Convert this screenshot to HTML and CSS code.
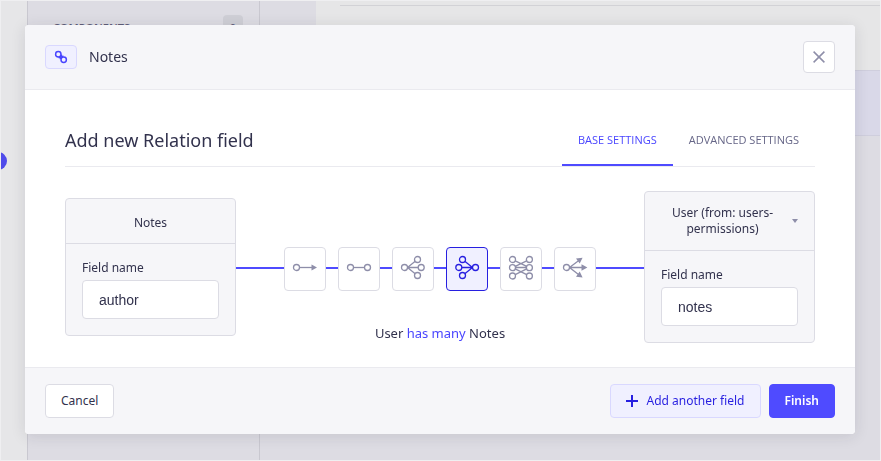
FILE: index.html
```html
<!DOCTYPE html>
<html lang="en">
<head>
<meta charset="utf-8">
<title>Content-Type Builder</title>
<link rel="stylesheet" href="styles.css">
</head>
<body>
<div class="page">
  <div class="rail"><span class="rail-dot"></span></div>
  <nav class="subnav">
    <span class="subnav-title">COMPONENTS</span>
    <span class="subnav-count">0</span>
  </nav>
  <main class="content">
    <div class="panel"><div class="panel-rule"></div></div>
    <div class="panel-action"></div>
  </main>
</div>

<div class="overlay">
  <div class="modal" role="dialog" aria-modal="true" aria-labelledby="dialog-title">
    <header class="modal-header">
      <span class="badge">
        <svg width="14" height="14" viewBox="0 0 14 14" fill="none" stroke="currentColor" stroke-width="1.5">
          <circle cx="4.3" cy="4.3" r="2.7"/><circle cx="9.7" cy="9.7" r="2.7"/><path d="M4.6 7.6C6 7.8 7.6 6.4 7.4 4.6M6.4 9.2C6.2 7.4 7.8 6 9.4 6.2"/>
        </svg>
      </span>
      <span class="crumb">Notes</span>
      <button class="close" type="button" aria-label="Close">
        <svg width="12" height="12" viewBox="0 0 12 12" fill="none" stroke="currentColor" stroke-width="1.5"><path d="M.6 .6L11.4 11.4M11.4 .6L.6 11.4"/></svg>
      </button>
    </header>

    <div class="modal-body">
      <div class="title-row">
        <h1 id="dialog-title">Add new Relation field</h1>
        <div class="tabs" role="tablist">
          <button class="tab tab-active" type="button" role="tab" aria-selected="true">BASE SETTINGS</button>
          <button class="tab" type="button" role="tab" aria-selected="false">ADVANCED SETTINGS</button>
        </div>
      </div>

      <div class="relation">
        <section class="card">
          <div class="card-head">Notes</div>
          <div class="card-body">
            <label for="source-name">Field name</label>
            <input id="source-name" type="text" value="author">
          </div>
        </section>

        <div class="middle">
          <div class="kinds">
            <button class="kind" type="button" aria-label="has one">
              <svg width="26" height="26" viewBox="0 0 26 26"><path d="M7.5 13.5H20"/><circle cx="4.5" cy="13.5" r="3"/><path class="tip" d="M19.5 10.5L25 13.5L19.5 16.5Z"/></svg>
            </button>
            <button class="kind" type="button" aria-label="has and belongs to one">
              <svg width="26" height="26" viewBox="0 0 26 26"><path d="M7.5 13.5H18.5"/><circle cx="4.5" cy="13.5" r="3"/><circle cx="21.5" cy="13.5" r="3"/></svg>
            </button>
            <button class="kind" type="button" aria-label="belongs to many">
              <svg width="26" height="26" viewBox="0 0 26 26"><path d="M7.5 13.5L15.2 7.3M7.5 13.5H18M7.5 13.5L15.2 19.7"/><circle cx="4.5" cy="13.5" r="3"/><circle cx="17.5" cy="5.5" r="3"/><circle cx="21.2" cy="13.5" r="3"/><circle cx="17.5" cy="21.5" r="3"/></svg>
            </button>
            <button class="kind kind-active" type="button" aria-label="has many" aria-pressed="true">
              <svg width="26" height="26" viewBox="0 0 26 26"><path d="M18.5 13.5L10.8 7.3M18.5 13.5H8M18.5 13.5L10.8 19.7"/><circle cx="21.5" cy="13.5" r="3"/><circle cx="8.5" cy="5.5" r="3"/><circle cx="4.8" cy="13.5" r="3"/><circle cx="8.5" cy="21.5" r="3"/></svg>
            </button>
            <button class="kind" type="button" aria-label="has and belongs to many">
              <svg width="26" height="26" viewBox="0 0 26 26"><path d="M7.2 6.8L18.7 12.3M7.2 12.3L18.7 6.8M7.5 13.5H18.5M7.2 14.9L18.7 20.6M7.2 20.6L18.7 14.9"/><circle cx="4.5" cy="5.5" r="3"/><circle cx="4.5" cy="13.7" r="3"/><circle cx="4.5" cy="22" r="3"/><circle cx="21.4" cy="5.5" r="3"/><circle cx="21.4" cy="13.7" r="3"/><circle cx="21.4" cy="22" r="3"/></svg>
            </button>
            <button class="kind" type="button" aria-label="has many, one way">
              <svg width="26" height="26" viewBox="0 0 26 26"><path d="M7.5 13.5L16.5 6.8M7.5 13.5H20M7.5 13.5L16.5 20.4"/><circle cx="4.5" cy="13.5" r="3"/><path class="tip" d="M14 4.4L20.6 3.8L17.7 9.6ZM19.5 10.3L25.4 13.5L19.5 16.7ZM14 22.8L20.6 23.4L17.7 17.6Z"/></svg>
            </button>
          </div>
          <p class="sentence">User <span>has many</span> Notes</p>
        </div>

        <section class="card">
          <button class="card-head card-picker" type="button" aria-haspopup="menu">
            <span>User (from: users-permissions)</span>
            <svg width="6" height="4" viewBox="0 0 6 4" fill="currentColor"><path d="M0 0H6L3 4Z"/></svg>
          </button>
          <div class="card-body">
            <label for="target-name">Field name</label>
            <input id="target-name" type="text" value="notes">
          </div>
        </section>
      </div>
    </div>

    <footer class="modal-footer">
      <button class="btn" type="button">Cancel</button>
      <div class="actions">
        <button class="btn btn-secondary" type="button">
          <svg width="12" height="12" viewBox="0 0 12 12" fill="currentColor"><path d="M5 0H7V5H12V7H7V12H5V7H0V5H5Z"/></svg>
          Add another field
        </button>
        <button class="btn btn-primary" type="button">Finish</button>
      </div>
    </footer>
  </div>
</div>
</body>
</html>
```
FILE: styles.css
```css
* { box-sizing: border-box; }

body {
  margin: 0;
  font-family: "Noto Sans", "Open Sans", sans-serif;
  font-size: 12px;
  line-height: 16px;
  color: #32324d;
}

button, input { font: inherit; color: inherit; margin: 0; }
button { cursor: pointer; }
svg { display: block; flex: none; }

.page {
  display: flex;
  height: 100vh;
  overflow: hidden;
  background: #dddce3;
  border: 1px solid #efeff1;
}

.rail {
  flex: none;
  width: 26px;
  display: flex;
  align-items: flex-start;
  overflow: hidden;
  background: #e6e6e8;
}

.rail-dot {
  flex: none;
  width: 18px;
  height: 18px;
  margin: 151px 0 0 -12px;
  border-radius: 50%;
  background: #4f4bea;
}

.subnav {
  flex: none;
  width: 233px;
  display: flex;
  align-items: flex-start;
  justify-content: space-between;
  padding: 14px 16px 0 25px;
  border: solid #c9c8d0;
  border-width: 0 1px;
  font-size: 11px;
  font-weight: 600;
  color: #5d5c78;
}

.subnav-title { padding-top: 5px; }

.subnav-count {
  width: 20px;
  padding-top: 5px;
  border-radius: 4px;
  background: #cfcfd6;
  text-align: center;
}

.content { flex: 1; padding-left: 56px; }
.panel { height: 69px; padding: 4px 0 0 24px; background: #e6e6e7; }
.panel-rule { height: 1px; background: #d2d2d6; }
.panel-action { height: 66px; background: #d9d8e8; border: solid #cfcedd; border-width: 1px 0; }

.overlay {
  position: fixed;
  inset: 0;
  padding: 25px 26px 26px 25px;
}

.modal {
  overflow: hidden;
  border-radius: 4px;
  background: #fff;
  box-shadow: 0 2px 15px rgba(33, 33, 52, .12);
}

.modal-header {
  display: flex;
  align-items: center;
  padding: 16px 20px;
  background: #f6f6f9;
  border-bottom: 1px solid #eaeaef;
}

.badge {
  display: grid;
  place-items: center;
  width: 32px;
  height: 24px;
  border: 1px solid #d9d8ff;
  border-radius: 4px;
  background: #f0f0ff;
  color: #4945ff;
}

.crumb { margin-left: 12px; font-size: 14px; }

.close {
  display: grid;
  place-items: center;
  width: 32px;
  height: 32px;
  margin-left: auto;
  padding: 0;
  border: 1px solid #dcdce4;
  border-radius: 4px;
  background: #fff;
  color: #8e8ea9;
}

.modal-body { padding: 24px 40px; }

.title-row {
  display: flex;
  align-items: stretch;
  justify-content: space-between;
  border-bottom: 1px solid #eaeaef;
}

h1 { margin: 0; font-size: 18px; line-height: 52px; font-weight: 400; }

.tabs { display: flex; }

.tab {
  padding: 18px 16px 16px;
  border: 0;
  border-bottom: 2px solid transparent;
  background: none;
  font-family: "Open Sans", "Noto Sans", sans-serif;
  font-size: 11px;
  color: #666687;
}

.tab-active { border-color: #4f4bff; color: #4945ff; }

.relation {
  display: flex;
  align-items: center;
  margin-top: 24px;
}

.card {
  flex: none;
  width: 171px;
  border: 1px solid #dcdce4;
  border-radius: 4px;
  background: #f6f6f9;
}

.card-head {
  padding: 16px 16px 12px;
  border-bottom: 1px solid #dcdce4;
  text-align: center;
}

.card-picker {
  display: flex;
  align-items: center;
  gap: 8px;
  width: 100%;
  padding: 13px 16px;
  border-width: 0 0 1px;
  background: none;
}

.card-picker span { flex: 1; }
.card-picker svg { color: #8e8ea9; }

.card-body { padding: 16px; }

label { display: block; margin-bottom: 4px; }

input {
  display: block;
  width: 100%;
  height: 39px;
  padding: 0 16px;
  border: 1px solid #dcdce4;
  border-radius: 4px;
  background: #fff;
  font-family: "Liberation Sans", Arial, sans-serif;
  font-size: 14px;
}

.middle { flex: 1; align-self: stretch; padding-top: 56px; }

.kinds {
  position: relative;
  display: flex;
  justify-content: center;
  gap: 12px;
}

.kinds::before {
  content: "";
  position: absolute;
  top: 20px;
  left: 0;
  right: 0;
  height: 2px;
  background: #4f4bff;
}

.kind {
  position: relative;
  width: 42px;
  height: 44px;
  padding: 6px 7px 10px;
  border: 1px solid #dcdce4;
  border-radius: 4px;
  background: #fff;
  color: #8e8ea9;
}

.kind svg { fill: none; stroke: currentColor; stroke-width: 1.3; }
.kind .tip { fill: currentColor; stroke: none; }
.kind circle { fill: #fff; }
.kind-active circle { fill: #f0f0ff; }
.kind-active { border-color: #271fe0; background: #f0f0ff; color: #271fe0; }

.sentence { margin: 34px 0 0; text-align: center; font-size: 13px; }
.sentence span { color: #4945ff; }

.modal-footer {
  display: flex;
  justify-content: space-between;
  padding: 16px 20px;
  background: #f6f6f9;
  border-top: 1px solid #eaeaef;
}

.actions { display: flex; gap: 8px; }

.btn {
  display: flex;
  align-items: center;
  gap: 8px;
  padding: 8px 15px;
  border: 1px solid #dcdce4;
  border-radius: 4px;
  background: #fff;
}

.btn-secondary { border-color: #d9d8ff; background: #f0f0ff; color: #271fe0; }
.btn-primary { border-color: #4f4bff; background: #4f4bff; color: #fff; font-weight: 600; }
```
